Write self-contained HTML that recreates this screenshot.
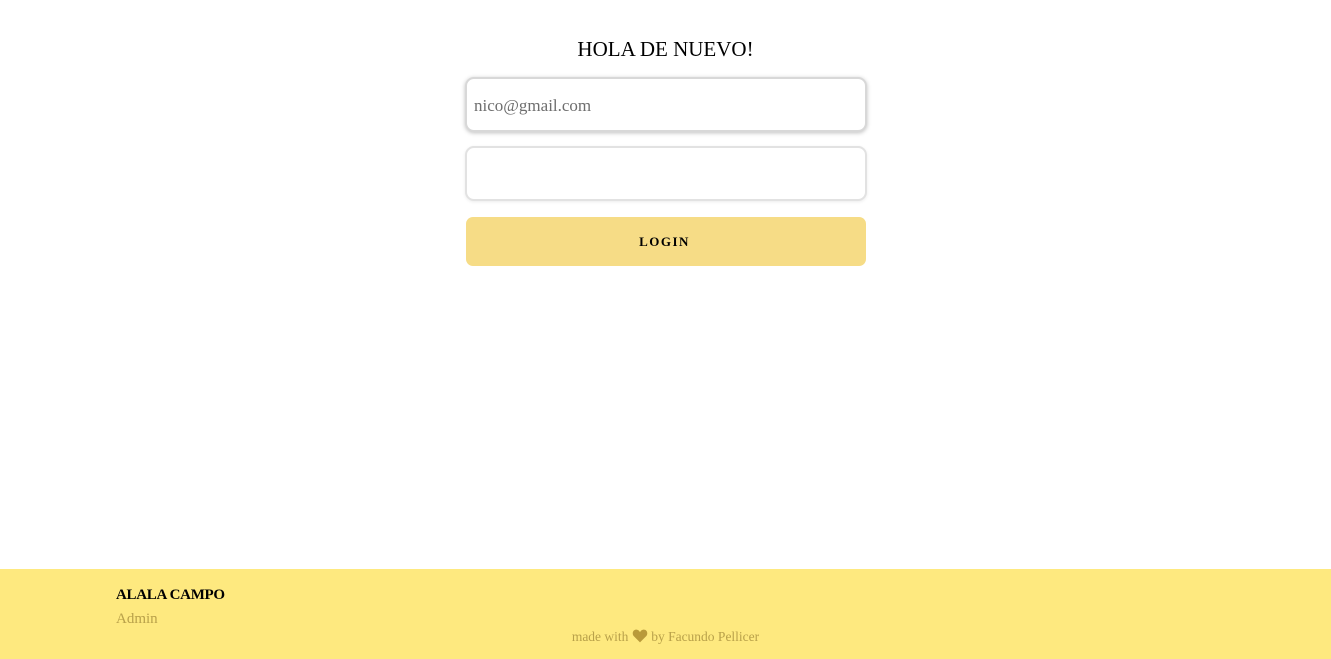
<!DOCTYPE html>
<html><head><style>
html,body{margin:0;padding:0;width:1331px;height:659px;background:#fff;overflow:hidden;font-family:"Liberation Serif",serif;}
h1{position:absolute;top:37px;left:0;width:1331px;text-align:center;font-size:21px;font-weight:normal;margin:0;color:#000;}
.in{position:absolute;left:465px;width:402px;height:55px;border:2px solid #e2e2e2;border-radius:9px;box-sizing:border-box;background:#fff;}
#e{top:77px;box-shadow:0 1px 4px rgba(0,0,0,.25);font-size:17px;color:#6e6e6e;padding:17px 0 0 7px;border-color:#d8d8d8;}
#p{top:146px;box-shadow:0 1px 3px rgba(0,0,0,.08);}
.btn{position:absolute;left:466px;top:217px;width:400px;height:49px;background:#f6dc86;border-radius:7px;text-align:center;line-height:49px;font-size:13px;font-weight:bold;letter-spacing:1.5px;text-indent:-3px;}
footer{position:absolute;left:0;top:569px;width:1331px;height:90px;background:#fee97f;}
.t{position:absolute;left:116px;top:18px;font-weight:bold;font-size:15px;letter-spacing:-.3px;}
.a{position:absolute;left:116px;top:42px;font-size:15px;color:#b9a14a;}
.m{position:absolute;left:0;width:1331px;text-align:center;top:60px;font-size:13.5px;color:#b9a14a;}
</style></head><body>
<h1>HOLA DE NUEVO!</h1>
<div class="in" id="e">nico@gmail.com</div>
<div class="in" id="p"></div>
<div class="btn">LOGIN</div>
<footer>
<div class="t">ALALA CAMPO</div>
<div class="a">Admin</div>
<div class="m">made with <svg width="16" height="14" viewBox="0 0 24 22" style="vertical-align:-2px"><path d="M12 21L2 11C-1 7 1 1 6 1c3 0 5 2 6 4 1-2 3-4 6-4 5 0 7 6 4 10z" fill="#b99a3a"/></svg> by Facundo Pellicer</div>
</footer>
</body></html>
